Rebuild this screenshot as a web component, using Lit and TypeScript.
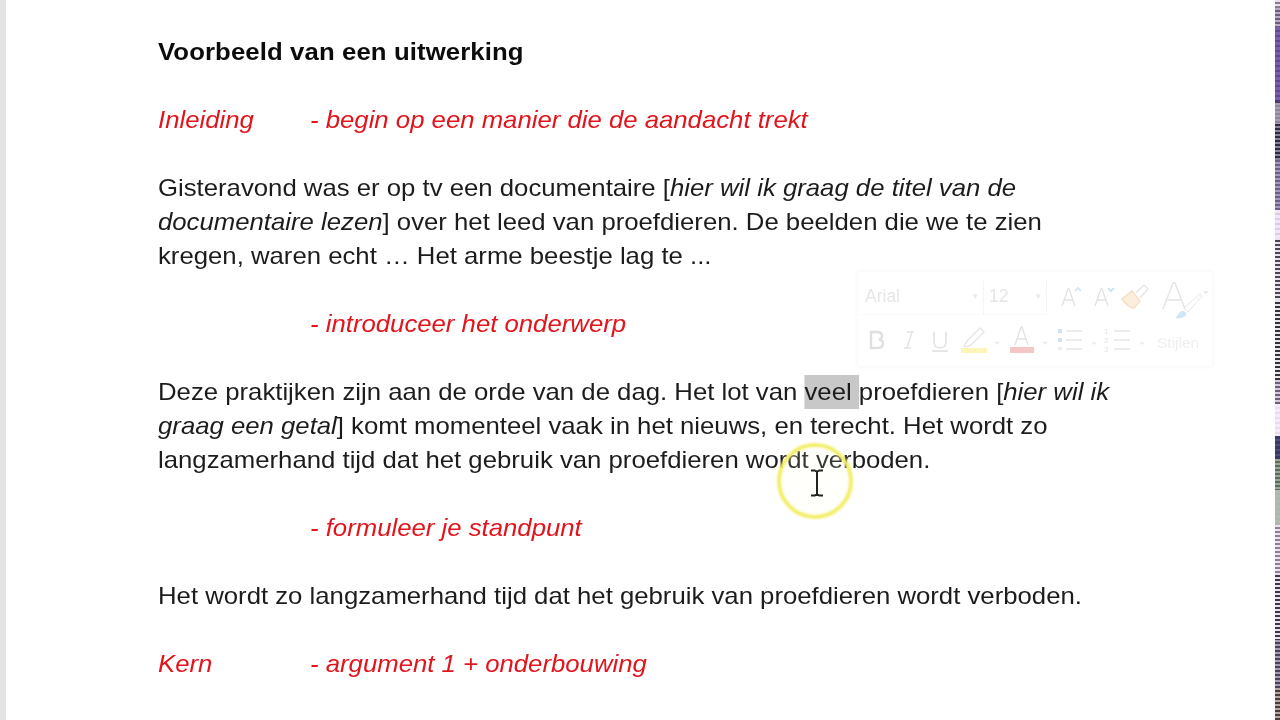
import { LitElement, html, css, svg } from "lit";
import { customElement } from "lit/decorators.js";

type Band = [number, number, string, string, number];
const BANDS: Band[] = [
  [0, 8, "#e8e0ea", "#8a7d92", 3],
  [8, 27, "#b9aec4", "#6b5c80", 3],
  [27, 100, "#7a5fb0", "#5d4a8c", 4],
  [100, 103, "#4a3a70", "#4a3a70", 3],
  [103, 124, "#a8a0b0", "#8c8498", 3],
  [124, 160, "#2e2840", "#8a8296", 3],
  [160, 210, "#6a5f88", "#a49cb4", 3],
  [210, 238, "#efe6f6", "#d8cce6", 4],
  [238, 300, "#e8e2ec", "#4a4454", 3],
  [300, 380, "#ecE8ea", "#34343c", 3],
  [380, 404, "#d8c8dc", "#6a5f78", 3],
  [404, 436, "#f4ecf8", "#e8dcf0", 4],
  [436, 459, "#3a3860", "#50507a", 4],
  [459, 490, "#9aa898", "#5c6a60", 3],
  [490, 525, "#b2b8b2", "#aeb4ae", 4],
  [525, 573, "#ece2f0", "#8c8098", 3],
  [573, 640, "#e8e2ec", "#3e3848", 3],
  [640, 688, "#a49cb0", "#4a4258", 3],
  [688, 720, "#b8a89c", "#4a3c40", 3],
];

@customElement("app-root")
export class AppRoot extends LitElement {
  static styles = css`
    :host {
      display: block;
      width: 1280px;
      height: 720px;
      overflow: hidden;
      position: relative;
      background: #fff;
    }
    .page {
      display: flex;
      width: 1280px;
      height: 720px;
    }
    .gutter {
      flex: 0 0 6px;
      background: #e3e3e3;
    }
    .doc {
      flex: 1;
      min-width: 0;
      padding: 35.400px 0 0 152px;
    }
    .sheet {
      font-family: "Liberation Sans", Arial, sans-serif;
      font-size: 24px;
      line-height: 34px;
      color: #1c1c1c;
      white-space: nowrap;
      transform-origin: left top;
      transform: scaleX(1.072);
      filter: blur(0.35px);
    }
    .strip {
      flex: 0 0 5px;
      display: flex;
      flex-direction: column;
      filter: blur(0.3px);
    }
    .strip div {
      flex: none;
    }
    .line {
      display: block;
      height: 34px;
    }
    .title {
      font-weight: 700;
      color: #0c0c0c;
      letter-spacing: 0.1px;
    }
    .red {
      color: #e2141c;
      font-style: italic;
      display: flex;
    }
    .label {
      flex: 0 0 141.800px;
    }
    .sel {
      display: inline-block;
      background: #c8c8c8;
    }
    .toolbar {
      position: absolute;
      left: 857px;
      top: 271px;
      width: 356px;
      height: 96px;
      box-sizing: border-box;
      border: 1px solid #fafafa;
      box-shadow: 0 0 5px #f8f8f8;
      background: #fff;
      font-family: "Liberation Sans", Arial, sans-serif;
      color: #e6e6e6;
      display: flex;
      flex-direction: column;
      filter: blur(0.5px);
    }
    .row {
      display: flex;
      align-items: center;
      height: 49px;
    }
    .row2 {
      height: 43px;
    }
    .font {
      flex: 0 0 124px;
      margin-left: 2px;
      box-sizing: border-box;
      height: 36px;
      padding-left: 5px;
      display: flex;
      align-items: center;
      font-size: 17.500px;
      border-right: 1px solid #f4f4f4;
      border-bottom: 1px solid #f9f9f9;
    }
    .size {
      flex: 0 0 63px;
      box-sizing: border-box;
      height: 36px;
      padding-left: 5px;
      display: flex;
      align-items: center;
      font-size: 17.500px;
      border-bottom: 1px solid #f9f9f9;
      border-right: 1px solid #f6f6f6;
    }
    .grow {
      flex: 1;
    }
    .caret {
      color: #e8e8e8;
      font-size: 9px;
      margin-right: 5px;
    }
    .icons {
      display: block;
    }
    .digits {
      font-size: 8px;
      fill: #e2e2e2;
      font-family: "Liberation Sans", Arial, sans-serif;
    }
    .stijlen {
      font-size: 15.500px;
      color: #efefef;
    }
    .overlay {
      position: absolute;
      left: 770px;
      top: 436px;
      pointer-events: none;
    }
  `;

  private stripRows() {
    const rows: unknown[] = [];
    for (const [start, end, a, b, step] of BANDS) {
      let y = start;
      let i = 0;
      while (y < end) {
        const h = Math.min(i % 2 === 0 ? step - 1 : 2, end - y);
        const c = i % 2 === 0 ? a : b;
        rows.push(html`<div style="height:${h}px;background:${c}"></div>`);
        y += h;
        i++;
      }
    }
    return rows;
  }

  private toolbar() {
    return html`
      <div class="toolbar">
        <div class="row">
          <div class="font"><span>Arial</span><span class="grow"></span><span class="caret">▾</span></div>
          <div class="size"><span>12</span><span class="grow"></span><span class="caret">▾</span></div>
          ${svg`<svg class="icons" width="165" height="48" viewBox="0 0 165 48">
            <g fill="none" stroke="#e2e2e2" stroke-width="1.300">
              <path d="M15 33l6-17h1l6 17M17.500 27h9"/>
              <path d="M48 33l6-17h1l6 17M50.500 27h9"/>
            </g>
            <path d="M28 18l3-3 3 3" fill="none" stroke="#cfe6f5" stroke-width="1.600"/>
            <path d="M61 15l3 3 3-3" fill="none" stroke="#bfe0f5" stroke-width="1.600"/>
            <path d="M75 26l10-8 8 10-6 7c-4 0-9-5-12-9z" fill="#fbeedd" stroke="#f6dfc0" stroke-width="1.300"/>
            <path d="M89 20l8-8 4 4-8 9" fill="none" stroke="#e6e6e6" stroke-width="1.500"/>
            <path d="M116 36l10-26h2l10 26M120 27h14" fill="none" stroke="#e4e4e4" stroke-width="1.400"/>
            <path d="M137 35l16-14 2 2-14 16z" fill="none" stroke="#e6e6e6"/>
            <path d="M128 45c3-1 3-6 7-7 3 0 5 2 4 4-2 3-6 4-11 3z" fill="#cfe6f5"/>
            <path d="M156 18h6l-3 3z" fill="#e8e8e8"/>
          </svg>`}
        </div>
        <div class="row row2">
          ${svg`<svg class="icons" width="299" height="43" viewBox="0 0 299 43">
            <g transform="translate(0 -49)">
              <path d="M13 60h6c4 0 5 2 5 4s-1 3-3 3.500c3 .5 4 2 4 4.500 0 3-2 4-5 4h-7z" fill="none" stroke="#e0e0e0" stroke-width="2.400"/>
              <path d="M49 60h7M46 76h7M54 60l-5 16" fill="none" stroke="#e2e2e2" stroke-width="1.500"/>
              <path d="M76 60v10c0 4 3 6 6 6s6-2 6-6V60" fill="none" stroke="#e0e0e0" stroke-width="1.500"/>
              <path d="M74 79h16" stroke="#dcdcdc" stroke-width="1.500"/>
              <path d="M106 74l3-5 13-13 4 4-13 13-5 2z" fill="none" stroke="#e4e4e4" stroke-width="1.300"/>
              <rect x="103" y="76" width="26" height="5" fill="#fdf6b8"/>
              <path d="M136 70h6l-3 3z" fill="#eeeeee"/>
              <path d="M157 73l6-18h1l6 18M159 67h9" fill="none" stroke="#e2e2e2" stroke-width="1.300"/>
              <rect x="152" y="75" width="24" height="6" fill="#f6c6c6"/>
              <path d="M184 70h6l-3 3z" fill="#eeeeee"/>
              <rect x="200" y="57" width="4" height="4" fill="#cfe3f5"/>
              <rect x="200" y="66" width="4" height="4" fill="#cfe3f5"/>
              <rect x="200" y="75" width="4" height="3" fill="#eeeeee"/>
              <path d="M208 59h16M208 68h16M208 77h16" stroke="#e6e6e6" stroke-width="1.500"/>
              <path d="M233 70h6l-3 3z" fill="#eeeeee"/>
              <text class="digits" x="246" y="62">1</text>
              <text class="digits" x="246" y="71">2</text>
              <text class="digits" x="246" y="80">3</text>
              <path d="M256 59h16M256 68h16M256 77h16" stroke="#e6e6e6" stroke-width="1.500"/>
              <path d="M281 70h6l-3 3z" fill="#eeeeee"/>
            </g>
          </svg>`}
          <span class="stijlen">Stijlen</span>
        </div>
      </div>
    `;
  }

  render() {
    return html`
      <div class="page">
        <div class="gutter"></div>
        <div class="doc">
          <div class="sheet">
            <div class="line title">Voorbeeld van een uitwerking</div>
            <div class="line"></div>
            <div class="line red"><span class="label">Inleiding</span><span>- begin op een manier die de aandacht trekt</span></div>
            <div class="line"></div>
            <div class="line">Gisteravond was er op tv een documentaire [<i>hier wil ik graag de titel van de</i></div>
            <div class="line"><i>documentaire lezen</i>] over het leed van proefdieren. De beelden die we te zien</div>
            <div class="line">kregen, waren echt … Het arme beestje lag te ...</div>
            <div class="line"></div>
            <div class="line red"><span class="label"></span><span>- introduceer het onderwerp</span></div>
            <div class="line"></div>
            <div class="line">Deze praktijken zijn aan de orde van de dag. Het lot van <span class="sel">veel&nbsp;</span>proefdieren [<i>hier wil ik</i></div>
            <div class="line"><i>graag een getal</i>] komt momenteel vaak in het nieuws, en terecht. Het wordt zo</div>
            <div class="line">langzamerhand tijd dat het gebruik van proefdieren wordt verboden.</div>
            <div class="line"></div>
            <div class="line red"><span class="label"></span><span>- formuleer je standpunt</span></div>
            <div class="line"></div>
            <div class="line">Het wordt zo langzamerhand tijd dat het gebruik van proefdieren wordt verboden.</div>
            <div class="line"></div>
            <div class="line red"><span class="label">Kern</span><span>- argument 1 + onderbouwing</span></div>
          </div>
        </div>
        <div class="strip">${this.stripRows()}</div>
      </div>
      ${this.toolbar()}
      <svg class="overlay" width="90" height="90" viewBox="0 0 90 90">
        <defs>
          <filter id="soft" x="-20%" y="-20%" width="140%" height="140%"><feGaussianBlur stdDeviation="1" /></filter>
        </defs>
        <circle cx="45" cy="45" r="36" fill="rgba(255,255,220,0.12)" stroke="#f3ee66" stroke-width="4" filter="url(#soft)" />
        <path d="M41 34.500h4.500M48.500 34.500h4.500M47 35.500v23M41 59.500h4.500M48.500 59.500h4.500M45 35c1 0 2 0 2 1M49 35c-1 0-2 0-2 1M45 59c1 0 2 0 2-1M49 59c-1 0-2 0-2-1" fill="none" stroke="#222" stroke-width="2" />
      </svg>
    `;
  }
}
